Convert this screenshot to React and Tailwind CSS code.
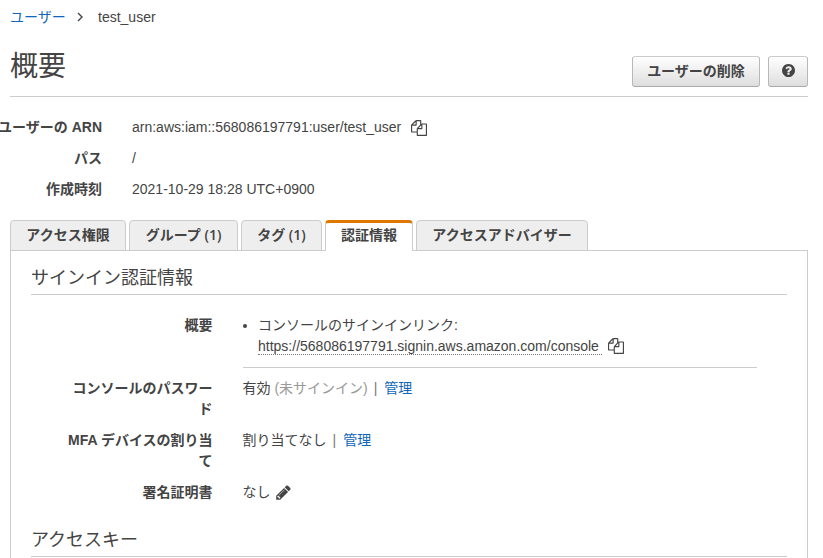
import React from "react";

function CopyIcon() {
  return (
    <svg viewBox="0 0 1792 1792" className="h-4 w-4 shrink-0 fill-[#444]">
      <path d="M1696 384q40 0 68 28t28 68v1216q0 40-28 68t-68 28h-960q-40 0-68-28t-28-68v-288h-544q-40 0-68-28t-28-68v-672q0-40 20-88t48-76l408-408q28-28 76-48t88-20h416q40 0 68 28t28 68v328q68-40 128-40h416zm-544 213l-299 299h299v-299zm-640-384l-299 299h299v-299zm196 647l316-316v-416h-384v416q0 40-28 68t-68 28h-416v640h512v-256q0-40 20-88t48-76zm956 804v-1152h-384v416q0 40-28 68t-68 28h-416v640h896z" />
    </svg>
  );
}

function PencilIcon() {
  return (
    <svg viewBox="0 0 1792 1792" className="h-[17px] w-[17px] shrink-0 fill-[#444]">
      <path d="M491 1536l91-91-235-235-91 91v107h128v128h107zm523-928q0-22-22-22-10 0-17 7l-542 542q-7 7-7 17 0 22 22 22 10 0 17-7l542-542q7-7 7-17zm-54-192l416 416-832 832h-416v-416zm683 96q0 53-37 90l-166 166-416-416 166-165q36-38 90-38 53 0 91 38l235 234q37 39 37 91z" />
    </svg>
  );
}

function HelpIcon() {
  return (
    <svg viewBox="128 128 1536 1536" className="mb-[3px] h-[13px] w-[13px] fill-[#444]">
      <path d="M1024 1376v-192q0-14-9-23t-23-9h-192q-14 0-23 9t-9 23v192q0 14 9 23t23 9h192q14 0 23-9t9-23zm256-672q0-88-55.500-163t-138.500-116-170-41q-243 0-371 213-15 24 8 42l132 100q7 6 19 6 16 0 25-12 53-68 86-92 34-24 86-24 48 0 85.500 26t37.500 59q0 38-20 61t-68 45q-63 28-115.500 86.500t-52.500 125.500v36q0 14 9 23t23 9h192q14 0 23-9t9-23q0-19 21.500-49.500t54.500-49.500q32-18 49-28.500t46-35 44.500-48 28-60.500 12.500-81zm384 192q0 209-103 385.500t-279.500 279.500-385.500 103-385.500-103-279.500-279.500-103-385.500 103-385.500 279.500-279.500 385.500-103 385.500 103 279.500 279.500 103 385.500z" />
    </svg>
  );
}

const button =
  "flex h-[31px] items-center justify-center rounded-[3px] border border-[#b8b8b8] border-t-[#ccc] border-b-[#aaa] bg-linear-to-b from-white to-[#dedede] font-bold";

function SummaryRow({ label, children }) {
  return (
    <div className="flex h-[31px] items-center">
      <div className="mr-[30px] flex w-[102px] shrink-0 justify-end font-bold">{label}</div>
      <div className="flex items-center">{children}</div>
    </div>
  );
}

function Tab({ width, active, children }) {
  return (
    <div
      className={`${width} flex h-[31px] items-center justify-center rounded-t-[4px] border border-[#ccc] font-['Open_Sans','Noto_Sans_CJK_JP',sans-serif] text-[14px] font-semibold ${
        active ? "border-t-[3px] border-b-0 border-t-[#e07700] bg-white pb-[5px]" : "bg-[#eee] pb-0.5"
      }`}
    >
      {children}
    </div>
  );
}

function Detail({ label, height, children }) {
  return (
    <div className={`${height} flex`}>
      <div className="mr-[30px] w-[181.5px] shrink-0 text-right font-bold">{label}</div>
      <div className="flex-1">{children}</div>
    </div>
  );
}

function Separator() {
  return <span className="mr-[7px] ml-[6px] text-[#777]">|</span>;
}

export default function App() {
  return (
    <div className="h-[558px] w-[823px] overflow-hidden bg-white font-['Liberation_Sans','Noto_Sans_CJK_JP',sans-serif] text-[14px] leading-[21px] whitespace-nowrap text-[#444]">
      <nav className="flex h-[34px] items-center pl-[10px]">
        <a className="w-[56px] text-[#1166bb]">ユーザー</a>
        <svg viewBox="0 0 6 10" className="ml-[11px] h-[10px] w-[6px] fill-none stroke-[#444] stroke-[1.4]">
          <path d="M1 1L5 5L1 9" />
        </svg>
        <span className="ml-[15px]">test_user</span>
      </nav>

      <header className="mr-[15px] ml-[10px] flex h-[63px] items-start justify-between border-b border-[#ccc]">
        <h1 className="mt-[14px] text-[28px] leading-[38px]">概要</h1>
        <div className="mt-[22px] flex gap-2">
          <div className={`${button} w-[128px]`}>ユーザーの削除</div>
          <div className={`${button} w-[40px]`}>
            <HelpIcon />
          </div>
        </div>
      </header>

      <section className="mt-[15px] h-[108px]">
        <SummaryRow label="ユーザーの ARN">
          <span className="mr-[10px]">arn:aws:iam::568086197791:user/test_user</span>
          <CopyIcon />
        </SummaryRow>
        <SummaryRow label="パス">/</SummaryRow>
        <SummaryRow label="作成時刻">2021-10-29 18:28 UTC+0900</SummaryRow>
      </section>

      <div className="ml-[10px] flex gap-[3px]">
        <Tab width="w-[116px]">アクセス権限</Tab>
        <Tab width="w-[109px]">グループ (1)</Tab>
        <Tab width="w-[81px]">タグ (1)</Tab>
        <Tab width="w-[88px]" active>認証情報</Tab>
        <Tab width="w-[172px]">アクセスアドバイザー</Tab>
      </div>
      <div className="mr-[15px] ml-[10px] flex h-px">
        <div className="-mt-px h-px w-[316px] bg-[#ccc]" />
        <div className="-mt-px ml-[86px] h-px flex-1 bg-[#ccc]" />
      </div>

      <main className="-mt-px mr-[15px] ml-[10px] h-[320px] border-x border-[#ccc] px-5">
        <h2 className="h-[44px] border-b border-[#ccc] pt-[14px] text-[18px] leading-[27px]">サインイン認証情報</h2>
        <div className="pt-5 pr-[30px]">
          <Detail label="概要" height="h-[63px]">
            <div className="ml-[0.5px] h-[53px] border-b border-[#ccc]">
              <div className="flex">
                <span className="mt-[9px] mr-[11px] h-1 w-1 rounded-full bg-[#444]" />
                <span>コンソールのサインインリンク:</span>
              </div>
              <div className="ml-[15px] flex items-center">
                <span className="mr-[6px] h-[19px] w-[344px] border-b border-dotted border-[#777] leading-[20px]">
                  https://568086197791.signin.aws.amazon.com/console
                </span>
                <CopyIcon />
              </div>
            </div>
          </Detail>
          <Detail label={<>コンソールのパスワー<br />ド</>} height="h-[52px]">
            有効 <span className="text-[#999]">(未サインイン)</span>
            <Separator />
            <a className="text-[#1166bb]">管理</a>
          </Detail>
          <Detail label={<>MFA デバイスの割り当<br />て</>} height="h-[52px]">
            割り当てなし
            <Separator />
            <a className="text-[#1166bb]">管理</a>
          </Detail>
          <Detail label="署名証明書" height="h-[37px]">
            <div className="flex items-center gap-1">
              なし <PencilIcon />
            </div>
          </Detail>
        </div>
        <h2 className="h-[38px] border-b border-[#ccc] pt-[8px] text-[18px] leading-[27px]">アクセスキー</h2>
      </main>
    </div>
  );
}
